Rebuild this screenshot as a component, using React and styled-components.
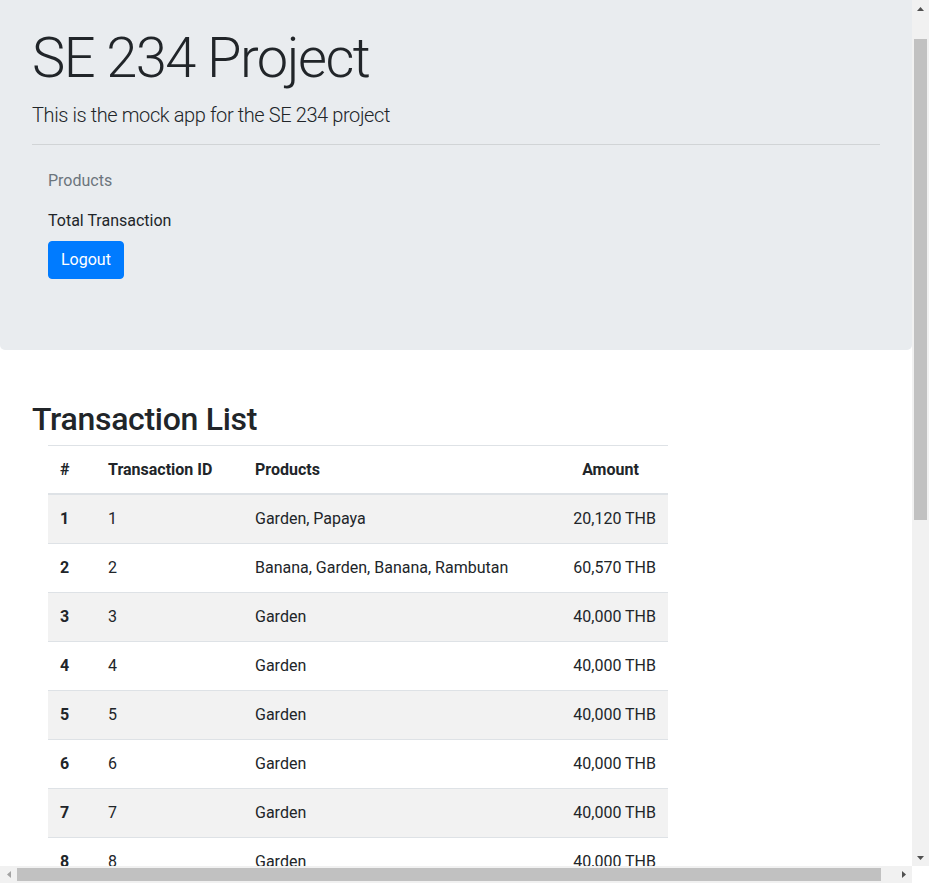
import React from "react";
import styled, { createGlobalStyle } from "styled-components";

const GlobalStyle = createGlobalStyle`
  html, body {
    margin: 0;
    padding: 0;
    background: #fff;
    overflow: hidden;
  }
  body {
    font-family: Roboto, "Open Sans", "Liberation Sans", sans-serif;
    font-size: 16px;
    line-height: 1.5;
    color: #212529;
  }
  * {
    box-sizing: border-box;
  }
`;

// browser window: page area + the two scrollbars drawn around it
const Frame = styled.div`
  display: grid;
  grid-template-columns: 1fr 17px;
  grid-template-rows: 1fr 17px;
  width: 100vw;
  height: 100vh;
`;

const Viewport = styled.main`
  overflow: hidden;
  min-width: 0;
  min-height: 0;
`;

const ScrollBar = styled.div`
  display: flex;
  flex-direction: ${(props) => (props.horizontal ? "row" : "column")};
  background: #f1f1f1;
`;

const Arrow = styled.div`
  flex: 0 0 17px;
  display: flex;
  align-items: center;
  justify-content: center;
`;

const Track = styled.div`
  flex: 1;
  display: flex;
  flex-direction: ${(props) => (props.horizontal ? "row" : "column")};
  padding: ${(props) => (props.horizontal ? "2px 0" : "22px 2px 0")};
`;

const Thumb = styled.div`
  background: #c1c1c1;
  flex: 0 0 ${(props) => props.size}px;
`;

const Corner = styled.div`
  background: #fff;
`;

const Triangle = ({ dir, color = "#505050" }) => {
  const points = {
    up: "0,4 3.5,0 7,4",
    down: "0,0 7,0 3.5,4",
    left: "4,0 4,7 0,3.5",
    right: "0,0 0,7 4,3.5",
  }[dir];
  const vertical = dir === "up" || dir === "down";
  return (
    <svg
      width={vertical ? 7 : 4}
      height={vertical ? 4 : 7}
      viewBox={vertical ? "0 0 7 4" : "0 0 4 7"}
    >
      <polygon points={points} fill={color} />
    </svg>
  );
};

const Jumbotron = styled.div`
  background: #e9ecef;
  padding: 25px 32px 71px;
  border-radius: 0 0 5px 5px;
`;

const Display = styled.h1`
  margin: 0 0 8px;
  font-size: 56px;
  font-weight: 300;
  line-height: 1.2;
  letter-spacing: -1.5px;
  color: #212529;
`;

const Lead = styled.p`
  margin: 0;
  font-size: 20px;
  font-weight: 300;
  line-height: 1.5;
  letter-spacing: -0.4px;
  color: #212529;
`;

const Divider = styled.hr`
  margin: 14px 0 16px;
  border: 0;
  border-top: 1px solid rgba(0, 0, 0, 0.1);
`;

const Nav = styled.nav`
  display: flex;
  flex-direction: column;
  align-items: flex-start;
`;

const NavLink = styled.span`
  display: block;
  padding: 8px 16px;
  color: ${(props) => (props.disabled ? "#6c757d" : "#212529")};
`;

const NavItem = styled.div`
  padding: 0 16px;
`;

const Button = styled.button`
  font-family: inherit;
  font-size: 16px;
  line-height: 1.5;
  padding: 6px 12px;
  color: #fff;
  background: #007bff;
  border: 1px solid #007bff;
  border-radius: 4px;
  cursor: pointer;
`;

const Content = styled.div`
  padding: 0 32px 16px;
`;

const Title = styled.h2`
  margin: 50px 0 6px;
  font-size: 32px;
  font-weight: 500;
  line-height: 1.2;
  letter-spacing: -0.3px;
`;

const Table = styled.table`
  margin-left: 16px;
  width: 620px;
  table-layout: fixed;
  border-collapse: collapse;
  color: #212529;
`;

const Th = styled.th`
  padding: 12px 12px 11px;
  text-align: ${(props) => props.align || "left"};
  font-weight: 700;
  border-top: 1px solid #dee2e6;
  border-bottom: 2px solid #dee2e6;
  white-space: nowrap;
`;

const Tr = styled.tr`
  background: ${(props) => (props.striped ? "rgba(0, 0, 0, 0.05)" : "transparent")};
`;

const Td = styled.td`
  padding: 12px;
  border-top: 1px solid #dee2e6;
  text-align: ${(props) => props.align || "left"};
  font-weight: ${(props) => (props.bold ? 700 : 400)};
  white-space: nowrap;
`;

const transactions = [
  { id: 1, products: "Garden, Papaya", amount: "20,120" },
  { id: 2, products: "Banana, Garden, Banana, Rambutan", amount: "60,570" },
  ...Array.from({ length: 18 }, (_, i) => ({
    id: i + 3,
    products: "Garden",
    amount: "40,000",
  })),
];

const App = () => (
  <>
    <GlobalStyle />
    <Frame>
      <Viewport>
        <Jumbotron>
          <Display>SE 234 Project</Display>
          <Lead>This is the mock app for the SE 234 project</Lead>
          <Divider />
          <Nav>
            <NavLink disabled>Products</NavLink>
            <NavLink>Total Transaction</NavLink>
            <NavItem>
              <Button>Logout</Button>
            </NavItem>
          </Nav>
        </Jumbotron>
        <Content>
          <Title>Transaction List</Title>
          <Table>
            <colgroup>
              <col style={{ width: 48 }} />
              <col style={{ width: 147 }} />
              <col style={{ width: 310 }} />
              <col style={{ width: 115 }} />
            </colgroup>
            <thead>
              <tr>
                <Th>#</Th>
                <Th>Transaction ID</Th>
                <Th>Products</Th>
                <Th align="center">Amount</Th>
              </tr>
            </thead>
            <tbody>
              {transactions.map((t, i) => (
                <Tr key={t.id} striped={i % 2 === 0}>
                  <Td bold>{t.id}</Td>
                  <Td>{t.id}</Td>
                  <Td>{t.products}</Td>
                  <Td align="right">{t.amount} THB</Td>
                </Tr>
              ))}
            </tbody>
          </Table>
        </Content>
      </Viewport>
      <ScrollBar>
        <Arrow>
          <Triangle dir="up" />
        </Arrow>
        <Track>
          <Thumb size={481} />
        </Track>
        <Arrow>
          <Triangle dir="down" />
        </Arrow>
      </ScrollBar>
      <ScrollBar horizontal>
        <Arrow>
          <Triangle dir="left" color="#a3a3a3" />
        </Arrow>
        <Track horizontal>
          <Thumb size={864} />
        </Track>
        <Arrow>
          <Triangle dir="right" />
        </Arrow>
      </ScrollBar>
      <Corner />
    </Frame>
  </>
);

export default App;
